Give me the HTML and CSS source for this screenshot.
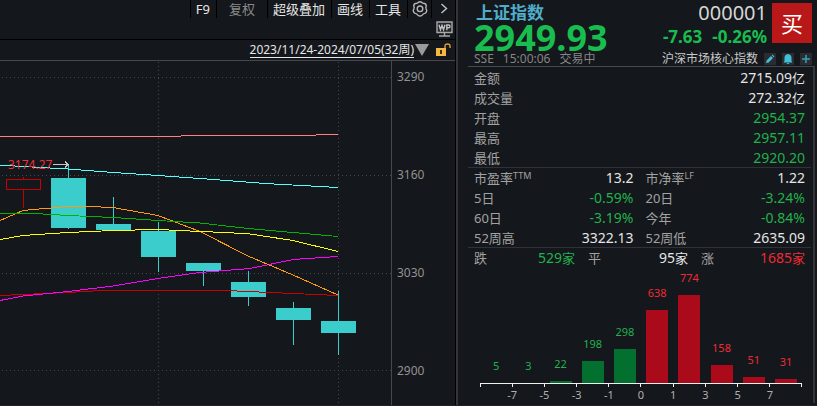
FILE: index.html
```html
<!DOCTYPE html>
<html lang="zh-CN">
<head>
<meta charset="utf-8">
<title>上证指数 000001</title>
<link rel="stylesheet" href="styles.css">
</head>
<body>
<main class="terminal">
  <section class="chart-pane" aria-label="周K线">
    <nav class="toolbar">
      <button class="tool">F9</button>
      <button class="tool tool-wide tool-dim">复权</button>
      <button class="tool">超级叠加</button>
      <button class="tool">画线</button>
      <button class="tool">工具</button>
      <button class="tool tool-icon" aria-label="设置">
        <svg width="18" height="18" viewBox="0 0 18 18" fill="none" stroke="#b4b4b4" stroke-width="1.4" stroke-linejoin="round"><path d="M6.9 2.6Q9 .8 11.1 2.6L12.2 3.3Q15 3.3 15.3 5.8Q14.6 7.4 15.2 9Q16.5 11.4 14.4 13.1Q12.6 13.2 11.1 15.2Q9 16.8 6.9 15.2Q5.5 13.2 3.6 13.1Q1.5 11.4 2.8 9Q3.4 7.4 2.7 5.8Q3 3.3 5.8 3.3Z"/><circle cx="9" cy="8.8" r="2.8"/></svg>
      </button>
      <button class="tool tool-icon" aria-label="展开">
        <svg width="10" height="12" viewBox="0 0 10 12" fill="none" stroke="#c4c4c4" stroke-width="1.4"><path d="M2.5 1 7.500 5.500 2.500 10"/></svg>
      </button>
    </nav>
    <div class="overlay-row">
      <svg width="17" height="16" viewBox="0 0 17 16" role="img" aria-label="WP"><path d="M1 1H16V11.5H1Z" fill="#24272a" stroke="#a8a8a8" stroke-width="1.4"/><path d="M8.5 12V15M3 15H14" stroke="#a8a8a8" stroke-width="1.4"/><path d="M3 3.7 4.5 8.8 6 4.5 7.5 8.8 9 3.7M10.8 9.3V4H12.6Q14 4 14 5.4T12.6 6.8H10.8" fill="none" stroke="#c0c0c0" stroke-width="1.4"/></svg>
    </div>
    <div class="range-row">
      <button class="range"><span class="range-text">2023/11/24-2024/07/05(32周)</span><svg width="14" height="12" viewBox="0 0 14 12"><path d="M0 0H14L7 12Z" fill="#9a9a9a"/></svg></button>
      <button class="lock" aria-label="解锁">
        <svg width="16" height="14" viewBox="0 0 16 14"><path d="M1 5H11V13H1Z" fill="#f5b942"/><path d="M10 5V3Q10 1 12.5 1T15 3V5" fill="none" stroke="#d9a036" stroke-width="1.4"/><path d="M5 7H7V11H5Z" fill="#3a3020"/></svg>
      </button>
    </div>
    <div class="plot-row">
      <svg class="plot" viewBox="0 61 391 343" preserveAspectRatio="xMinYMin meet" role="img" aria-label="K线与均线">
        <g class="grid"><path d="M2 77.500H391M2 175.500H391M2 273.500H391M2 370.500H391M158.500 62V404M338.500 62V404"/></g>
        <g class="wick"><path d="M68.500 165V229M113.500 197V230M158.500 222V272M203.500 263V286M248.500 271V306M293.500 302V345M338.500 291V355"/></g>
        <g class="body"><path d="M51 178h35v50h-35zM96 224h35v6h-35zM141 231h35v26h-35zM186 263h35v8h-35zM231 282h35v15h-35zM276 308h35v12h-35zM321 321h35v12h-35z"/></g>
        <path class="rise" d="M6.500 179.500H40.500V189.500H6.500ZM23.500 177V179M23.500 190V208"/>
        <g class="average">
          <path stroke="#ff8080" d="M0 136.500H181M181 135.500H316M316 134.500H338"/>
          <polyline stroke="#54ffff" points="0,165 23,166.500 68,169 113,172.500 158,175.500 200,178.500 265,183.500 338,187.500"/>
          <polyline stroke="#cc0000" points="0,295.500 23,294.500 68,292.500 102,290.500 226,290.500 248,291.500 293,293.500 338,295.500"/>
          <polyline stroke="#ff00ff" points="0,300.500 23,296 68,291.500 113,286 158,278.500 200,272.500 250,268.500 293,259.500 338,256.500"/>
          <polyline stroke="#ff9a10" points="0,220.500 23,210.500 45,208.500 68,206.500 88,206.500 113,207.500 158,215.500 200,231.500 248,256 293,275 338,295"/>
          <polyline stroke="#00b400" points="0,213 35,213.500 68,215.500 113,217.500 158,220.500 200,223 248,228.500 293,232.500 338,236.500"/>
          <polyline stroke="#ffff00" points="0,239.500 23,235.500 68,232.500 113,230.500 158,229.500 200,231.500 226,232.500 250,234 293,240.500 338,251.500"/>
        </g>
        <text class="peak" x="8" y="169">3174.27</text>
        <path class="arrow" d="M53 164.500H68M65 161.500 68 164.500 65 167.500"/>
      </svg>
      <div class="price-axis"><span>3290</span><span>3160</span><span>3030</span><span>2900</span></div>
    </div>
  </section>

  <aside class="quote-pane">
    <header class="quote-head">
      <div class="head-left">
        <h1 class="name">上证指数</h1>
        <div class="price">2949.93</div>
      </div>
      <div class="head-right">
        <div class="code">000001</div>
        <div class="change"><span>-7.63</span><span>-0.26%</span></div>
      </div>
      <button class="buy">买</button>
    </header>
    <div class="status-row">
      <span>SSE</span><span>15:00:06</span><span>交易中</span>
      <a class="group" href="#core">沪深市场核心指数</a>
      <div class="chips">
        <button class="chip" aria-label="编辑"><svg width="12" height="12" viewBox="0 0 12 12"><path d="M2 10 2.600 7.500 7 3 9 5 4.600 9.400ZM7.700 2.300 8.500 1.500 10.500 3.500 9.700 4.300Z" fill="#3fc0da"/></svg></button>
        <button class="chip" aria-label="提醒"><svg width="12" height="12" viewBox="0 0 12 12"><path d="M6 1Q9.500 1.500 9.500 5V8L10.500 9.500H1.500L2.500 8V5Q2.500 1.500 6 1ZM4.500 10H7.500Q7 11 6 11T4.500 10Z" fill="#3fc0da"/></svg></button>
        <button class="chip" aria-label="添加"><svg width="12" height="12" viewBox="0 0 12 12"><path d="M6 2V10M2 6H10" stroke="#3a9fb5" stroke-width="1.500"/></svg></button>
      </div>
    </div>
    <div class="details">
      <dl class="list">
        <div class="item"><dt>金额</dt><dd>2715.09<i>亿</i></dd></div>
        <div class="item"><dt>成交量</dt><dd>272.32<i>亿</i></dd></div>
        <div class="item"><dt>开盘</dt><dd class="down">2954.37</dd></div>
        <div class="item"><dt>最高</dt><dd class="down">2957.11</dd></div>
        <div class="item"><dt>最低</dt><dd class="down">2920.20</dd></div>
      </dl>
      <dl class="list list-two">
        <div class="item"><dt>市盈率<sup>TTM</sup></dt><dd>13.2</dd></div>
        <div class="item"><dt>市净率<sup>LF</sup></dt><dd>1.22</dd></div>
        <div class="item"><dt>5日</dt><dd class="down">-0.59%</dd></div>
        <div class="item"><dt>20日</dt><dd class="down">-3.24%</dd></div>
        <div class="item"><dt>60日</dt><dd class="down">-3.19%</dd></div>
        <div class="item"><dt>今年</dt><dd class="down">-0.84%</dd></div>
        <div class="item"><dt>52周高</dt><dd>3322.13</dd></div>
        <div class="item"><dt>52周低</dt><dd>2635.09</dd></div>
      </dl>
      <dl class="list list-three">
        <div class="item"><dt>跌</dt><dd class="down">529<i>家</i></dd></div>
        <div class="item"><dt>平</dt><dd>95<i>家</i></dd></div>
        <div class="item"><dt>涨</dt><dd class="up">1685<i>家</i></dd></div>
      </dl>
      <div class="histogram">
        <div class="bars">
          <div class="bin down"><span>5</span><b style="--n:0"></b></div>
          <div class="bin down"><span>3</span><b style="--n:0"></b></div>
          <div class="bin down"><span>22</span><b style="--n:22"></b></div>
          <div class="bin down"><span>198</span><b style="--n:198"></b></div>
          <div class="bin down"><span>298</span><b style="--n:298"></b></div>
          <div class="bin up"><span>638</span><b style="--n:638"></b></div>
          <div class="bin up"><span>774</span><b style="--n:774"></b></div>
          <div class="bin up"><span>158</span><b style="--n:158"></b></div>
          <div class="bin up"><span>51</span><b style="--n:51"></b></div>
          <div class="bin up"><span>31</span><b style="--n:31"></b></div>
        </div>
        <div class="ticks"><i></i><i></i><i></i><i></i><i></i><i></i><i></i><i></i><i></i><i></i></div>
        <div class="tick-labels"><span>-7</span><span>-5</span><span>-3</span><span>-1</span><span>0</span><span>1</span><span>3</span><span>5</span><span>7</span></div>
      </div>
    </div>
  </aside>
</main>
</body>
</html>
```
FILE: styles.css
```css
* { box-sizing: border-box; }

body {
  margin: 0;
  background: #14171b;
  color: #e6e6e6;
  font: 12px/1 "Noto Sans", "Noto Sans CJK SC", sans-serif;
}

button {
  margin: 0;
  padding: 0;
  border: 0;
  background: none;
  color: inherit;
  font: inherit;
}

svg { display: block; flex: none; }

.terminal {
  display: flex;
  min-height: 100vh;
  border-bottom: 1px solid #241f27;
}

/* chart side */
.chart-pane {
  flex: 1;
  display: flex;
  flex-direction: column;
  min-width: 0;
  border-right: 1px solid #000;
}

.toolbar {
  display: flex;
  justify-content: flex-end;
  height: 18px;
}

.tool {
  display: flex;
  align-items: center;
  justify-content: center;
  padding: 0 6px 0 5px;
  border-left: 1px solid #000;
  font-size: 13px;
  line-height: 18px;
}

.tool-wide { padding: 0 12px; }
.tool-dim { color: #8a8a8a; }
.tool-icon { width: 24px; padding: 0; }

.overlay-row {
  display: flex;
  justify-content: flex-end;
  align-items: flex-end;
  height: 22px;
  padding: 0 2px 2px;
  border-bottom: 1px solid #000;
}

.range-row {
  display: flex;
  justify-content: flex-end;
  align-items: center;
  gap: 6px;
  height: 21px;
  padding-right: 4px;
  border-bottom: 1px solid #46484b;
}

.range { display: flex; align-items: center; gap: 1px; }

.range-text {
  border-bottom: 1px solid #e6e6e6;
  line-height: 14px;
}

.plot-row { flex: 1; display: flex; }
.plot { flex: 1; min-width: 0; height: 343px; shape-rendering: crispEdges; }

.grid { stroke: #45484c; stroke-dasharray: 1 3; }
.wick { stroke: #3bcccc; }
.body { fill: #3bcccc; }
.rise { fill: none; stroke: #c80000; }
.average { fill: none; }
.peak { fill: #f0303a; font-size: 12px; }
.arrow { fill: none; stroke: #c8c8c8; }

.price-axis {
  display: flex;
  flex-direction: column;
  gap: 82px;
  width: 64px;
  padding: 8px 0 0 5px;
  border-left: 1px solid #46484b;
  color: #929292;
  line-height: 16px;
}

/* quote side */
.quote-pane {
  width: 361px;
  padding-left: 10px;
  border-left: 2px solid #333538;
}

.quote-head {
  display: flex;
  height: 52px;
  padding: 3px 5px 0 6px;
}

.head-left { flex: 1; }

.name {
  margin: 0;
  padding-left: 2px;
  color: #50adca;
  font-size: 17px;
  font-weight: 700;
  line-height: 19px;
}

.price {
  color: #19bd4f;
  font-size: 36px;
  font-weight: 700;
  line-height: 32px;
}

.head-right { padding-right: 5px; text-align: right; }
.code { color: #d6d6d6; font-size: 20px; line-height: 20px; }

.change {
  display: flex;
  gap: 10px;
  justify-content: flex-end;
  color: #19bd4f;
  font-size: 17px;
  font-weight: 700;
  line-height: 28px;
}

.buy {
  width: 40px;
  height: 40px;
  background: #b91818;
  color: #fff;
  font-size: 22px;
}

.status-row {
  display: flex;
  align-items: center;
  gap: 9px;
  height: 14px;
  padding: 0 5px 0 6px;
  color: #858585;
}

.group { margin-left: auto; color: #c8c8c8; text-decoration: none; }
.chips { display: flex; gap: 6px; margin-left: -3px; }
.chip { width: 12px; height: 12px; background: #2b2c32; }

.details {
  margin-right: 2px;
  border-top: 1px solid #46484b;
  border-right: 2px solid #333538;
}

.list {
  margin: 0 2px 0 0;
  padding: 0 6px;
  box-shadow: inset 0 -1px #303236;
}

.list:first-child { padding-top: 1px; }
.list-two { display: grid; grid-template-columns: 1fr 1fr; column-gap: 12px; }
.list-three { display: grid; grid-template-columns: 101fr 100fr 104fr; column-gap: 13px; box-shadow: none; }

.item {
  display: flex;
  justify-content: space-between;
  height: 20px;
  line-height: 20px;
}

.item dt { color: #a2a2a2; font-size: 13px; }
.item dd { margin: 0; font-size: 14px; }
.item i { font-size: 13px; font-style: normal; }
.item sup { font-size: 9px; line-height: 1; vertical-align: 4px; }

.down { color: #21b14d; }
.up { color: #ee2b34; }

.histogram { padding: 4px 11px 0 12px; }

.bars {
  display: flex;
  align-items: flex-end;
  height: 111px;
}

.bin {
  flex: 1;
  display: flex;
  flex-direction: column;
  align-items: center;
  gap: 9px;
  font-size: 11px;
  line-height: 16px;
}

.bin b {
  width: 22px;
  height: calc(var(--n) * 88px / 774);
  background: #04702f;
}

.bin.up b { background: #ab0a1b; }

.ticks {
  display: flex;
  height: 4px;
  border-top: 1px solid #f0f0f0;
  border-right: 1px solid #f0f0f0;
}

.ticks i { flex: 1; border-left: 1px solid #f0f0f0; }

.tick-labels {
  display: flex;
  padding: 0 5%;
  color: #b0b0b0;
  font-size: 11px;
  line-height: 16px;
  text-align: center;
}

.tick-labels span { flex: 1; }
```
